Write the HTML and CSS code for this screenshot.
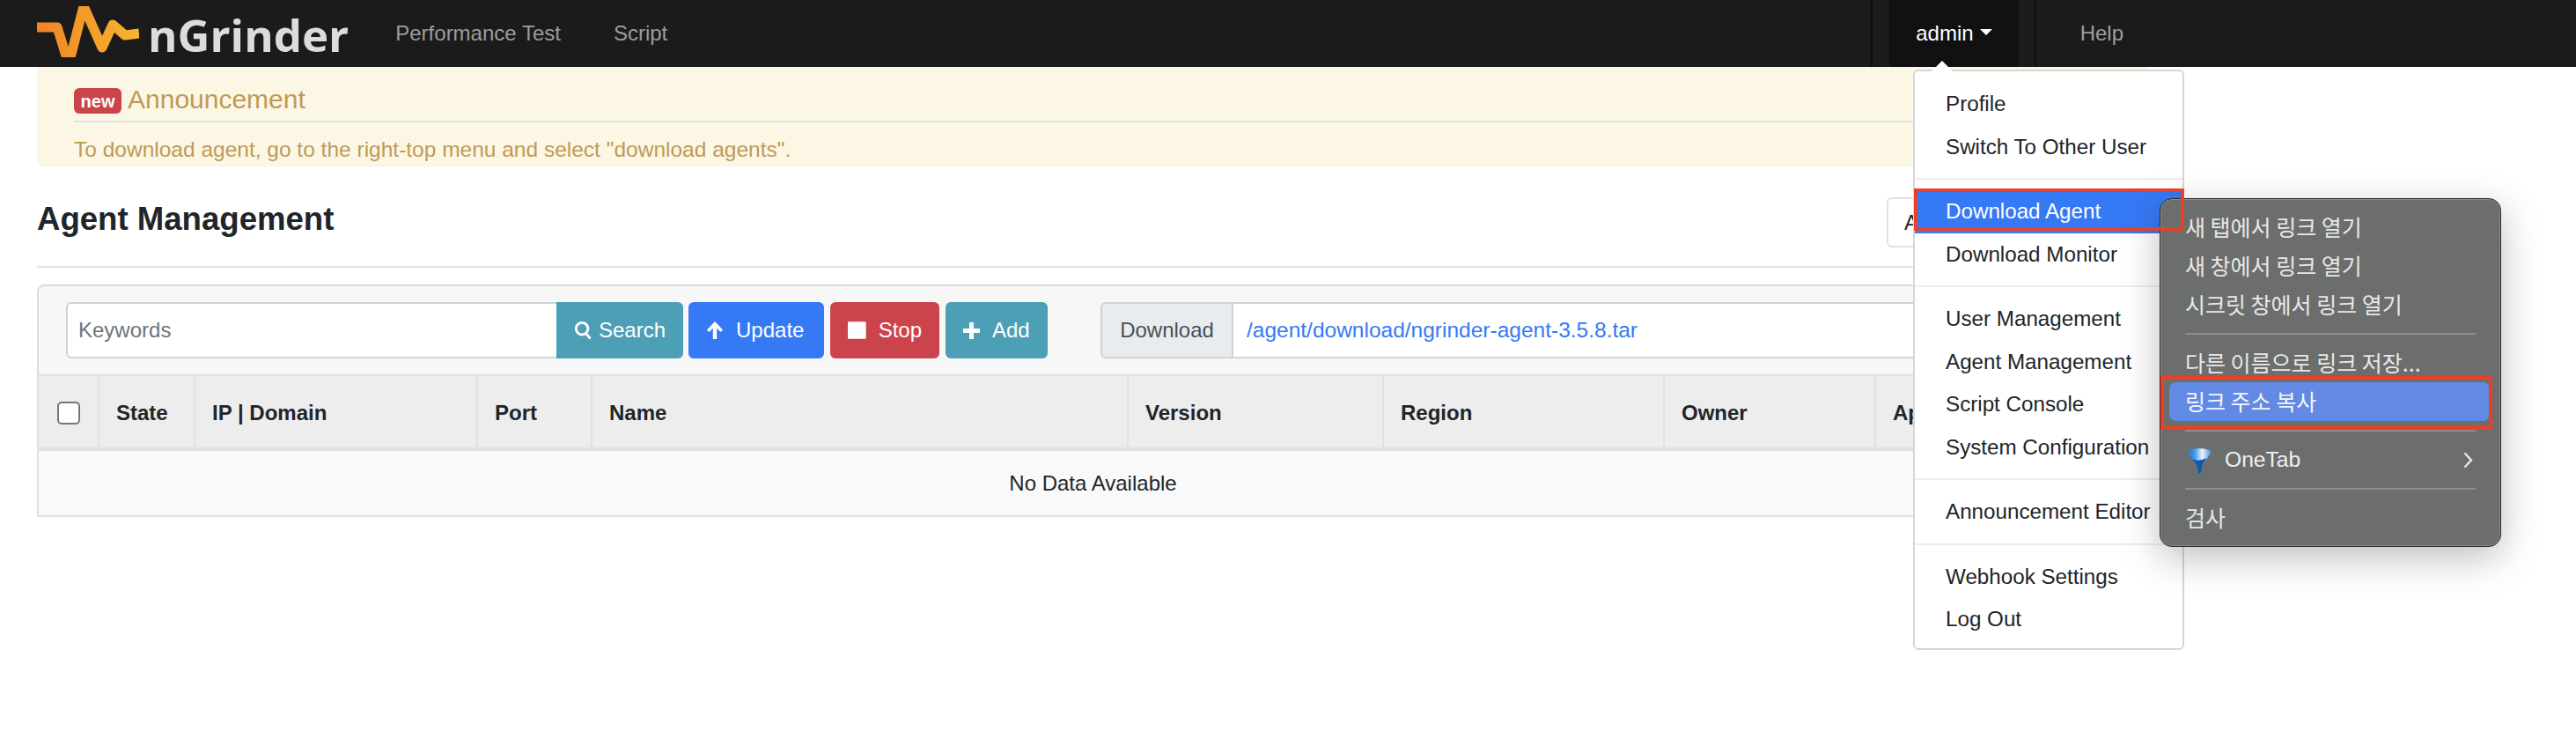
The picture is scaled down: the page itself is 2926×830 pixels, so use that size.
FILE: index.html
```html
<!DOCTYPE html>
<html>
<head>
<title>nGrinder - Agent Management</title>
<link rel="stylesheet" href="styles.css">
</head>
<body>

<nav class="navbar">
  <svg class="logo-mark" width="116" height="58" viewBox="0 0 116 58">
    <defs>
      <linearGradient id="pulse" x1="0" y1="0" x2="116" y2="0" gradientUnits="userSpaceOnUse">
        <stop offset="0" stop-color="#ef8427"/>
        <stop offset="1" stop-color="#f6b62e"/>
      </linearGradient>
    </defs>
    <polyline points="0,24 23,24 36,66 53,0 74,47 86,21 100,33 116,31" fill="none" stroke="url(#pulse)" stroke-width="11" stroke-linejoin="round"/>
  </svg>
  <span class="logo-text">nGrinder</span>
  <a class="nav-link nav-first">Performance Test</a>
  <a class="nav-link nav-second">Script</a>
  <div class="nav-right">
    <a class="nav-admin">admin<span class="caret"></span></a>
    <a class="nav-link nav-help">Help</a>
  </div>
</nav>

<div class="container">
  <div class="alert">
    <div class="alert-title"><span class="badge">new</span>Announcement</div>
    <div class="alert-body">To download agent, go to the right-top menu and select "download agents".</div>
  </div>

  <div class="page-header">
    <h2>Agent Management</h2>
    <div class="region-select">All</div>
  </div>

  <div class="toolbar">
    <input class="keywords" type="text" placeholder="Keywords">
    <button class="btn btn-info btn-search">
      <svg width="22" height="24" viewBox="0 0 22 24"><circle cx="10" cy="10" r="7.5" fill="none" stroke="#fff" stroke-width="3.2"/><path d="M15 16l5.5 6.5" stroke="#fff" stroke-width="3.2" fill="none"/></svg>
      Search
    </button>
    <button class="btn btn-primary btn-update">
      <svg width="20" height="22" viewBox="0 0 20 22"><path d="M10 1L1 10.500l2.500 2.500 4.300-4.500V21h4.400V8.500l4.300 4.500 2.500-2.500z" fill="#fff"/></svg>
      Update
    </button>
    <button class="btn btn-danger btn-stop">
      <svg width="21" height="20" viewBox="0 0 21 20"><rect width="21" height="20" rx="1" fill="#fff"/></svg>
      Stop
    </button>
    <button class="btn btn-info btn-add">
      <svg width="19" height="19" viewBox="0 0 19 19"><path d="M7 0h5v7h7v5h-7v7H7v-7H0V7h7z" fill="#fff"/></svg>
      Add
    </button>
    <div class="download-group">
      <span class="download-label">Download</span>
      <a class="download-link">/agent/download/ngrinder-agent-3.5.8.tar</a>
    </div>
  </div>

  <table class="agents">
    <colgroup>
      <col class="col-check"><col class="col-state"><col class="col-ip"><col class="col-port">
      <col class="col-name"><col class="col-version"><col class="col-region"><col class="col-owner"><col>
    </colgroup>
    <thead>
      <tr>
        <th><input class="check" type="checkbox"></th>
        <th>State</th>
        <th>IP | Domain</th>
        <th>Port</th>
        <th>Name</th>
        <th>Version</th>
        <th>Region</th>
        <th>Owner</th>
        <th>Approved</th>
      </tr>
    </thead>
    <tbody>
      <tr><td colspan="9">No Data Available</td></tr>
    </tbody>
  </table>
</div>

<!-- admin dropdown -->
<div class="user-menu">
  <a class="menu-item">Profile</a>
  <a class="menu-item">Switch To Other User</a>
  <div class="menu-divider"></div>
  <a class="menu-item active">Download Agent</a>
  <a class="menu-item">Download Monitor</a>
  <div class="menu-divider"></div>
  <a class="menu-item">User Management</a>
  <a class="menu-item">Agent Management</a>
  <a class="menu-item">Script Console</a>
  <a class="menu-item">System Configuration</a>
  <div class="menu-divider"></div>
  <a class="menu-item">Announcement Editor</a>
  <div class="menu-divider"></div>
  <a class="menu-item">Webhook Settings</a>
  <a class="menu-item">Log Out</a>
</div>

<!-- browser context menu -->
<div class="context-menu">
  <div class="ctx-row">새 탭에서 링크 열기</div>
  <div class="ctx-row">새 창에서 링크 열기</div>
  <div class="ctx-row">시크릿 창에서 링크 열기</div>
  <div class="ctx-sep"></div>
  <div class="ctx-row">다른 이름으로 링크 저장...</div>
  <div class="ctx-row selected">링크 주소 복사</div>
  <div class="ctx-sep"></div>
  <div class="ctx-row ctx-onetab">
    <svg class="funnel" width="27" height="29" viewBox="0 0 27 29">
      <defs>
        <linearGradient id="funnelFill" x1="0" y1="0" x2="1" y2="0">
          <stop offset="0" stop-color="#1c78dc"/>
          <stop offset="0.3" stop-color="#3f9cec"/>
          <stop offset="0.62" stop-color="#eef7fe"/>
          <stop offset="1" stop-color="#2c8ae4"/>
        </linearGradient>
      </defs>
      <path d="M0 5C4 0 23 0 27 5L17 20L15.500 29H12L10 20z" fill="url(#funnelFill)"/>
      <path d="M5 13Q11 17 21.500 12L17 20L15.500 29H12L10 20z" fill="#1557a6"/>
    </svg>
    <span class="onetab-label">OneTab</span>
    <svg class="chevron" width="11" height="19" viewBox="0 0 11 19"><path d="M1.500 1.500L9 9.500L1.500 17.500" fill="none" stroke="#e8e8e8" stroke-width="2.400"/></svg>
  </div>
  <div class="ctx-sep"></div>
  <div class="ctx-row">검사</div>
</div>

<!-- red marks drawn over the screenshot -->
<div class="mark mark-agent"></div>
<div class="mark mark-copy"></div>

</body>
</html>
```

FILE: styles.css
```css
body {
  margin: 0;
  font-family: "Liberation Sans", Arial, sans-serif;
  font-size: 24px;
  color: #212529;
  background: #fff;
}

.navbar {
  display: flex;
  align-items: center;
  height: 76px;
  padding: 0 464px 0 42px;
  box-sizing: border-box;
  background: #1b1b1b;
}
.logo-mark {
  align-self: flex-start;
  margin-top: 7px;
}
.logo-text {
  margin-left: 10px;
  margin-top: 2px;
  font-family: "Open Sans", sans-serif;
  font-size: 51px;
  font-weight: 700;
  color: #dcdcdc;
  filter: blur(0.6px);
}
.nav-link {
  color: #9d9d9d;
}
.nav-first {
  margin-left: 53px;
}
.nav-second {
  margin-left: 60px;
}
.nav-right {
  display: flex;
  align-items: stretch;
  align-self: stretch;
  margin-left: auto;
  padding: 0 19px;
  border-left: 2px solid #0e0e0e;
}
.nav-admin {
  display: flex;
  align-items: center;
  gap: 7px;
  padding: 0 30px;
  background: #111;
  color: #fff;
}
.caret {
  width: 0;
  height: 0;
  margin-bottom: 4px;
  border-left: 7px solid transparent;
  border-right: 7px solid transparent;
  border-top: 7px solid #fff;
}
.nav-help {
  display: flex;
  align-items: center;
  margin: 0 -19px 0 18px;
  padding: 0 50px;
  border-left: 2px solid #0e0e0e;
}

.container {
  width: 2399px;
  margin-left: 42px;
}

.alert {
  height: 113px;
  padding: 24px 42px 0;
  box-sizing: border-box;
  background: #fbf7e4;
  border-bottom: 1px solid #faefd6;
  border-radius: 0 0 8px 8px;
  color: #bf9a55;
}
.alert-title {
  display: flex;
  align-items: flex-start;
  gap: 7px;
  height: 29px;
  margin-bottom: 8px;
  font-size: 30px;
  line-height: 25px;
}
.alert-body {
  padding-top: 13px;
  border-top: 2px solid #e3e3dd;
  font-size: 24.5px;
  line-height: 36px;
}
.badge {
  width: 54px;
  height: 29px;
  border-radius: 6px;
  background: #cc444b;
  color: #fff;
  font-size: 20px;
  font-weight: 700;
  line-height: 30px;
  text-align: center;
}

.page-header {
  display: flex;
  justify-content: space-between;
  align-items: center;
  padding: 35px 0 21px;
  border-bottom: 2px solid #dee2e6;
}
.page-header h2 {
  margin: 0 0 8px;
  font-size: 36.6px;
}
.region-select {
  width: 298px;
  height: 57px;
  padding-left: 18px;
  box-sizing: border-box;
  border: 2px solid #dee2e6;
  border-radius: 6px;
  line-height: 53px;
}

.toolbar {
  display: flex;
  height: 102px;
  margin-top: 19px;
  padding: 18px 0 18px 31px;
  box-sizing: border-box;
  background: #f7f7f7;
  border: 2px solid #dcdcdc;
  border-bottom: none;
  border-radius: 8px 8px 0 0;
}
.keywords {
  width: 557px;
  height: 64px;
  padding: 0 12px;
  box-sizing: border-box;
  border: 2px solid #ced4da;
  border-right: none;
  border-radius: 6px 0 0 6px;
  font: inherit;
}
.keywords::placeholder {
  color: #6c757d;
}
.btn {
  display: flex;
  align-items: center;
  gap: 14px;
  height: 64px;
  padding: 0 20px;
  box-sizing: border-box;
  border: none;
  border-radius: 6px;
  color: #fff;
  font: inherit;
}
.btn-search {
  width: 144px;
  gap: 8px;
  border-radius: 0 6px 6px 0;
}
.btn-update {
  width: 154px;
  margin-left: 6px;
}
.btn-stop {
  width: 124px;
  margin-left: 7px;
}
.btn-add {
  width: 116px;
  margin-left: 7px;
}
.btn-info {
  background: #4c9fb5;
}
.btn-primary {
  background: #3679f5;
}
.btn-danger {
  background: #cc444b;
}
.download-group {
  display: flex;
  flex: 1;
  margin: 0 40px 0 60px;
}
.download-label {
  width: 151px;
  height: 64px;
  box-sizing: border-box;
  background: #e9ecef;
  border: 2px solid #ced4da;
  border-radius: 6px 0 0 6px;
  color: #495057;
  line-height: 60px;
  text-align: center;
}
.download-link {
  flex: 1;
  height: 64px;
  padding-left: 15px;
  box-sizing: border-box;
  background: #fff;
  border: 2px solid #ced4da;
  border-left: none;
  color: #3679f5;
  font-size: 24.5px;
  line-height: 60px;
}

.agents {
  width: 2399px;
  table-layout: fixed;
  border-collapse: separate;
  border-spacing: 0;
}
.col-check { width: 71px; }
.col-state { width: 109px; }
.col-ip { width: 321px; }
.col-port { width: 130px; }
.col-name { width: 609px; }
.col-version { width: 290px; }
.col-region { width: 319px; }
.col-owner { width: 240px; }
.agents th {
  height: 79px;
  padding: 2px 0 0 19px;
  box-sizing: content-box;
  background: #ededee;
  border-top: 2px solid #dee2e6;
  border-right: 2px solid #dee2e6;
  border-bottom: 4px solid #dee2e6;
  text-align: left;
}
.agents th:first-child {
  border-left: 2px solid #dee2e6;
}
.agents td {
  height: 71px;
  background: #f9f9f9;
  border: 2px solid #dee2e6;
  border-top: none;
  text-align: center;
}
.check {
  display: block;
  width: 26px;
  height: 26px;
  margin: 0 0 0 2px;
  appearance: none;
  background: #fff;
  border: 2px solid #767676;
  border-radius: 5px;
}

.user-menu {
  position: absolute;
  left: 2173px;
  top: 79px;
  width: 308px;
  height: 659px;
  padding-top: 13px;
  box-sizing: border-box;
  background: #fff;
  border: 2px solid #d6d6d6;
  border-radius: 6px;
}
.user-menu::before {
  content: "";
  position: absolute;
  left: 19px;
  top: -12px;
  border-left: 12px solid transparent;
  border-right: 12px solid transparent;
  border-bottom: 12px solid #fff;
}
.menu-item {
  display: block;
  height: 48.5px;
  padding-left: 35px;
  font-size: 24.2px;
  line-height: 47.5px;
  white-space: nowrap;
}
.menu-item.active {
  background: #3679f5;
  color: #fff;
}
.menu-divider {
  height: 2px;
  margin: 11px 0 12px;
  background: #ececf0;
}

.context-menu {
  position: absolute;
  left: 2453px;
  top: 225px;
  width: 388px;
  height: 396px;
  padding-top: 10px;
  box-sizing: border-box;
  background: #6c6e6d;
  border: 1px solid #2b2b2b;
  border-radius: 14px;
  box-shadow: inset 0 0 0 1px #8b8c8b, 0 12px 44px rgba(0, 0, 0, 0.26);
  color: #e8e8e8;
  font-family: "Noto Sans CJK KR", "Liberation Sans", sans-serif;
  font-size: 25px;
}
.ctx-row {
  height: 44px;
  margin: 0 12px 0 11px;
  padding-left: 17px;
  line-height: 42px;
  white-space: nowrap;
}
.ctx-row.selected {
  margin-left: 10px;
  padding-left: 18px;
  background: #628ae4;
  border-radius: 8px;
  color: #f4f6fb;
}
.ctx-sep {
  height: 2px;
  margin: 10px 28px;
  background: #8d8e8d;
}
.ctx-onetab {
  display: flex;
  align-items: center;
}
.funnel {
  margin-left: 3px;
}
.onetab-label {
  margin-left: 15px;
  font-family: "Liberation Sans", sans-serif;
  font-size: 24.6px;
  color: #f0f0f0;
}
.chevron {
  margin-left: auto;
  margin-right: 19px;
}

.mark {
  position: absolute;
  box-sizing: border-box;
  border: 4px solid #e8412a;
}
.mark-agent {
  left: 2174px;
  top: 214px;
  width: 307px;
  height: 48px;
}
.mark-copy {
  left: 2454px;
  top: 427px;
  width: 377px;
  height: 60px;
}
```
